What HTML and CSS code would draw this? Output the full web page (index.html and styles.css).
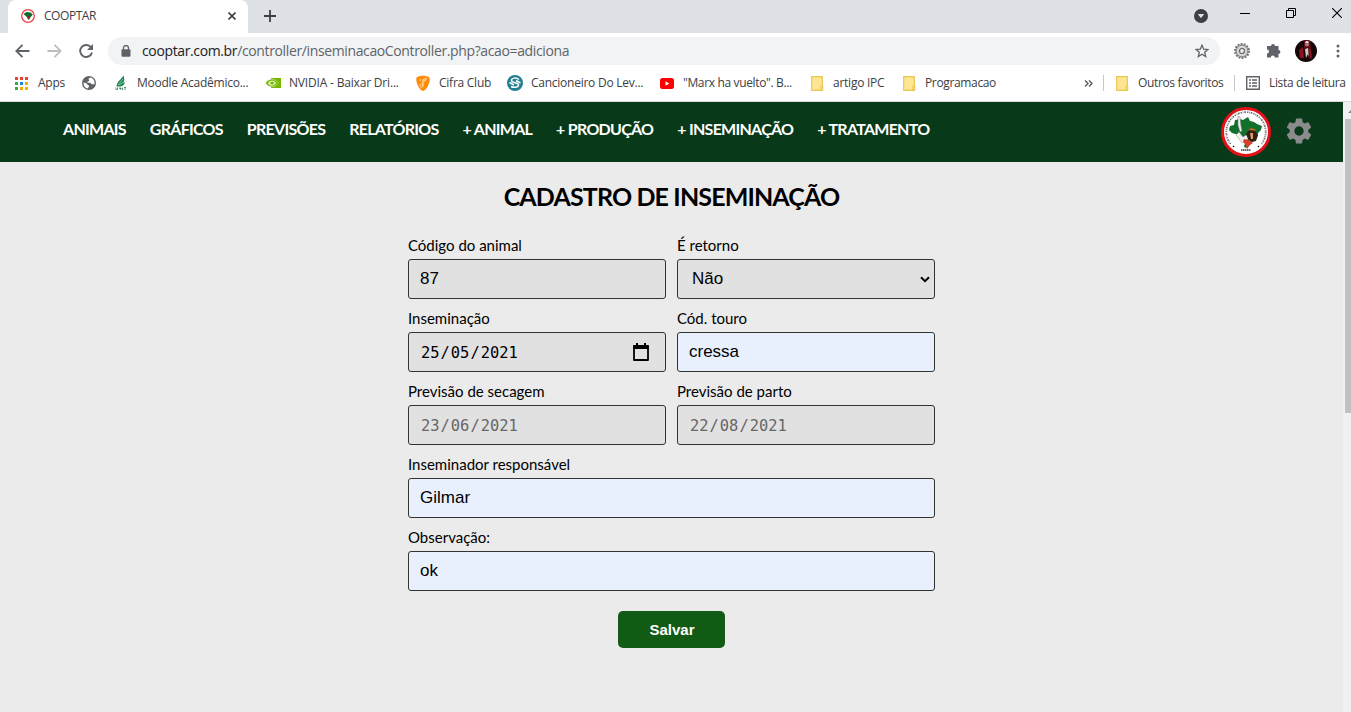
FILE: index.html
```html
<!DOCTYPE html>
<html lang="pt-BR">
<head>
<meta charset="utf-8">
<title>COOPTAR</title>
<link rel="stylesheet" href="styles.css">
</head>
<body>
<svg class="defs" width="0" height="0">
  <symbol id="emblem" viewBox="0 0 50 50">
    <circle cx="25" cy="25" r="23.5" fill="#fff" stroke="#e3101a" stroke-width="3"/>
    <circle cx="25" cy="25" r="19.8" fill="none" stroke="#777" stroke-width="1.7" stroke-dasharray="1.3 .9 .7 .8 1.7 1 92 0" stroke-dashoffset="0" opacity="0"/>
    <path d="M9.500 37A19.700 19.700 0 1 1 40.500 37" fill="none" stroke="#777" stroke-width="1.800" stroke-dasharray="1.300 .900 .700 .800 1.700 1"/>
    <path d="M9 19l4-1 1-5 5-1 3 1 5-3 2 4 4 1 3 2 5 2-1 4-3 3-1 5-4 2-3 4-3 4-3-1 1-4-4-3-2-5-7-2-3-3z" fill="#11712c"/>
    <path d="M17 9l2 1 1 9 1 5-2 1-2-7z" fill="#eee" stroke="#777" stroke-width=".5"/>
    <path d="M15 28l3-3 4 5 5-3 2 3-3 3-5 3z" fill="#eee" stroke="#888" stroke-width=".4"/>
    <path d="M25 27l3-4h6l3 5-2 6-4 1-4-3z" fill="#332015"/>
    <path d="M27 23l3-2 4 1 1 2z" fill="#b5652e"/>
    <path d="M29 26h3v6h-2z" fill="#dc9a70"/>
    <path d="M23 32l5 1 4 3-3 2-3 4-1-4-3-3z" fill="#d8402c"/>
    <path d="M20 43h10" stroke="#666" stroke-width="1.800" stroke-dasharray="1.500 .500"/>
    <circle cx="12.500" cy="39.500" r=".800"/><circle cx="37.500" cy="39.500" r=".800"/>
  </symbol>
  <symbol id="folder" viewBox="0 0 13 15">
    <path d="M.7.7h10.6v13.6H.7z" fill="#ffe594" stroke="#eac54f" stroke-width="1.2"/>
    <path d="M9.8 10h2v4h-2z" fill="#ffe594" stroke="#eac54f"/>
  </symbol>
</svg>

<div class="tabstrip">
  <div class="tab">
    <svg class="favicon" viewBox="0 0 14 14"><circle cx="7" cy="7" r="6.3" fill="#fff" stroke="#ee4248" stroke-width="1.3"/><path d="M2.5 5l3-2 4 .6 2.300 2-2 2.500-2.500 3-1.500-3z" fill="#126b2f"/><path d="M6 7l3 0-.5 3.500L7 9z" fill="#8c2c20"/></svg>
    <span class="tab-title">COOPTAR</span>
    <svg class="tab-close" viewBox="0 0 8 8"><path d="M.5.5l7 7m0-7l-7 7" stroke="#3c4043" stroke-width="1.6"/></svg>
  </div>
  <svg class="newtab" viewBox="0 0 12 12"><path d="M6 0v12M0 6h12" stroke="#3c4043" stroke-width="1.8"/></svg>
  <div class="window-controls">
    <svg width="14" height="14" viewBox="0 0 14 14"><circle cx="7" cy="7" r="7" fill="#3c4043"/><path d="M3.8 5h6.4L7 9.2z" fill="#dee1e6"/></svg>
    <svg width="10" height="11" viewBox="0 0 10 11"><path d="M0 5.5h10" stroke="#000"/></svg>
    <svg width="10" height="10" viewBox="0 0 10 10"><path d="M.5 2.5h7v7h-7zM2.5 2V.5h7v7H8" fill="none" stroke="#000"/></svg>
    <svg width="10" height="10" viewBox="0 0 10 10"><path d="M0 0l10 10M10 0L0 10" stroke="#000" stroke-width="1.1"/></svg>
  </div>
</div>

<div class="toolbar">
  <div class="history">
    <svg width="15" height="14" viewBox="0 0 15 14"><path d="M14.5 7H1.5M7.5.8L1.3 7l6.2 6.2" fill="none" stroke="#5f6368" stroke-width="1.8"/></svg>
    <svg width="15" height="14" viewBox="0 0 15 14"><path d="M.5 7h13M7.5.8L13.700 7l-6.200 6.200" fill="none" stroke="#bcbec1" stroke-width="1.8"/></svg>
    <svg width="14" height="14" viewBox="0 0 14 14"><path d="M12 3.400A6 6 0 1 0 13 8.500" fill="none" stroke="#5f6368" stroke-width="1.9"/><path d="M14 0v6H8z" fill="#5f6368"/></svg>
  </div>
  <div class="address">
    <svg width="10" height="12" viewBox="0 0 10 12"><path d="M2.500 5V3a2.500 2.500 0 0 1 5 0v2" fill="none" stroke="#5f6368" stroke-width="1.300"/><rect x=".5" y="4.300" width="9" height="7.500" rx="1" fill="#5f6368"/></svg>
    <span class="url"><b>cooptar.com.br</b>/controller/inseminacaoController.php?acao=adiciona</span>
    <svg class="star" width="14" height="14" viewBox="0 0 14 14"><path d="M7 1.200l1.700 4 4.300.3-3.300 2.800 1 4.300L7 10.300l-3.700 2.300 1-4.300L1 5.500l4.300-.3z" fill="none" stroke="#5f6368" stroke-width="1.300"/></svg>
  </div>
  <svg class="ext" width="16" height="17" viewBox="0 0 16 17"><circle cx="8" cy="8" r="7" fill="#ccc" stroke="#777" stroke-width="2" stroke-dasharray="1.900 1.240"/><circle cx="8" cy="8" r="5.800" fill="#d4d4d4" stroke="#8b8b8b"/><circle cx="8" cy="8" r="2.500" fill="#eee" stroke="#666" stroke-width="1.200"/></svg>
  <svg class="puzzle" width="15" height="15" viewBox="0 0 15 15"><path d="M4 3h1a2 2 0 0 1 4 0h3.500v4a1.900 1.900 0 0 1 0 3.800V14.500H8.800a2 2 0 0 0-4 0H1v-4a2 2 0 0 0 0-4V3z" fill="#5f6368"/></svg>
  <svg class="avatar" width="22" height="22" viewBox="0 0 22 22"><defs><clipPath id="face"><circle cx="11" cy="11" r="11"/></clipPath></defs><g clip-path="url(#face)"><path d="M0 0h22v22H0z" fill="#160708"/><path d="M9 0h6l1 8-4-1-3 2z" fill="#6d0c18"/><path d="M4 10l4-3 1 11H5zM13 7l3 2 1 9-2 1z" fill="#8a1322"/><path d="M10 9l3-1 1 10-1-4-2 4z" fill="#d9c8c4"/><circle cx="12" cy="4.500" r="2" fill="#9a8278"/><path d="M10 3h4l-1-2h-2z" fill="#ddd"/></g></svg>
  <svg class="more" width="4" height="14" viewBox="0 0 4 14"><g fill="#5f6368"><circle cx="2" cy="2" r="1.500"/><circle cx="2" cy="7" r="1.500"/><circle cx="2" cy="12" r="1.500"/></g></svg>
</div>

<div class="bookmarks">
  <div class="bm"><svg width="14" height="14" viewBox="0 0 14 14"><path d="M1 1h3v3H1zM6 1h3v3H6zM11 1h3v3h-3z" fill="#ea4335"/><path d="M1 6h3v3H1zM1 11h3v3H1z" fill="#34a853"/><path d="M6 6h3v3H6z" fill="#1e88e5"/><path d="M11 6h3v3h-3zM6 11h3v3H6zM11 11h3v3h-3z" fill="#f9ab00"/></svg><span>Apps</span></div>
  <div class="bm"><svg width="14" height="14" viewBox="0 0 14 14"><circle cx="7" cy="7" r="7" fill="#5f6368"/><path d="M8.500 1.500C7 1.500 6 3 7 4c1 .8-1 1.500-1.500 1.500-.5 1 0 1.500 1.500 1.300 2-.2 2 1.500 3.500 1.500H12.600C13 4.500 11 2 8.500 1.500zM1.500 6.500c2 0 3.500 1 4 2 .5.900 1.500.800 1.500 1.500 0 1-1 2-1.500 2.500C3 12 1.300 9.500 1.500 6.500z" fill="#fff"/></svg></div>
  <div class="bm"><svg width="16" height="16" viewBox="0 0 16 16"><path d="M3.500 11.500C4 6 8 5 10.500.5c1 3.500 1 5 0 7h1.500c-1 2.500-3 4-5 4z" fill="#16844e"/><path d="M5 10l5-6M6 10l5-3" stroke="#fff" stroke-width=".5"/><path d="M3 12.500v2.500m1.500-2.500V15M6 13h2v1.500m1.500-2V15m1.500-2.500h2m-1 0V15" stroke="#4f9874"/></svg><span>Moodle Acadêmico...</span></div>
  <div class="bm nvidia"><svg width="16" height="16" viewBox="0 0 16 16"><path d="M6 3h10v10H6z" fill="#76b900"/><path d="M.5 8c3-5 9-5 13 0-4 5-10 5-13 0z" fill="#76b900" stroke="#fff" stroke-width=".4"/><path d="M3 8c2.500-3.500 6-3.500 8 0-2.500 3.500-6 3.500-8 0z" fill="#e7f3cb"/><path d="M5 8c1.500-2 3-2 4 0-1 2-2.500 2-4 0z" fill="#76b900"/></svg><span>NVIDIA - Baixar Dri...</span></div>
  <div class="bm"><svg width="16" height="16" viewBox="0 0 16 16"><path d="M1.500 2.500C4 0 12 0 14.500 2.500 16 7 11 16 8 16S0 7 1.500 2.500z" fill="#ff8c0a"/><path d="M6 12c-2-1-1-3 1-3s1 4-1 3zm2-1V5l3-2v2L8 7m-3-1l1-2" fill="none" stroke="#ffe0ad"/></svg><span>Cifra Club</span></div>
  <div class="bm"><svg width="16" height="16" viewBox="0 0 16 16"><circle cx="8" cy="8" r="8" fill="#217f92"/><path d="M12 4.500C9 2 4.500 3 4.500 5.500S11.500 7.500 11.500 10 7 13 4 11.500M2.500 7.500l4.500 2.500M9 5.500l4.500 2.500" fill="none" stroke="#fff" stroke-width="1.500"/></svg><span>Cancioneiro Do Lev...</span></div>
  <div class="bm tight"><svg width="16" height="16" viewBox="0 0 16 16"><rect x="1" y="3" width="14" height="11" rx="2.500" fill="#f00"/><path d="M6.500 6.300v4.400l3.800-2.200z" fill="#fff"/></svg><span>"Marx ha vuelto". B...</span></div>
  <div class="bm folder"><svg width="13" height="15"><use href="#folder"/></svg><span>artigo IPC</span></div>
  <div class="bm folder tight"><svg width="13" height="15"><use href="#folder"/></svg><span>Programacao</span></div>
  <svg class="chev" width="9" height="7" viewBox="0 0 9 7"><path d="M1 .5l3 3-3 3m4-6l3 3-3 3" fill="none" stroke="#5f6368" stroke-width="1.500"/></svg>
  <i class="sep"></i>
  <div class="bm folder tight"><svg width="13" height="15"><use href="#folder"/></svg><span>Outros favoritos</span></div>
  <i class="sep"></i>
  <div class="bm tight"><svg width="16" height="14" viewBox="0 0 16 14"><path d="M1.700.7h12.600v12.600H1.700z" fill="none" stroke="#5f6368" stroke-width="1.400"/><path d="M4 4h2m1 0h5M4 7h2m1 0h5m-8 3h2m1 0h5" stroke="#5f6368" stroke-width="1.500"/></svg><span>Lista de leitura</span></div>
</div>

<div class="viewport">
  <div class="page">
    <header class="site-header">
      <nav class="nav">
        <a>ANIMAIS</a><a>GRÁFICOS</a><a>PREVISÕES</a><a>RELATÓRIOS</a><a>+ ANIMAL</a><a>+ PRODUÇÃO</a><a>+ INSEMINAÇÃO</a><a>+ TRATAMENTO</a>
      </nav>
      <svg class="logo" width="50" height="50"><use href="#emblem"/></svg>
      <svg class="gear" width="26" height="26" viewBox="2 2 20 20"><path fill="#8b8b8b" d="M19.140 12.940c.04-.3.060-.61.060-.94 0-.32-.020-.64-.070-.94l2.030-1.580c.18-.14.230-.41.120-.61l-1.920-3.320c-.12-.22-.37-.29-.59-.22l-2.390.96c-.5-.38-1.030-.7-1.620-.94l-.36-2.540c-.04-.24-.24-.41-.48-.41h-3.840c-.24 0-.43.17-.47.41l-.36 2.540c-.59.24-1.130.57-1.620.94l-2.390-.96c-.22-.08-.47 0-.59.220L2.740 8.870c-.12.210-.08.470.120.610l2.030 1.580c-.05.300-.09.630-.09.940s.02.640.07.940l-2.030 1.580c-.18.140-.23.410-.12.610l1.920 3.320c.12.220.37.290.59.220l2.390-.96c.5.380 1.030.7 1.620.94l.36 2.540c.05.240.24.410.48.410h3.840c.24 0 .44-.17.47-.41l.36-2.540c.59-.24 1.130-.56 1.620-.94l2.390.96c.22.080.47 0 .59-.22l1.920-3.320c.12-.22.070-.47-.12-.61l-2.010-1.580zM12 15.600a3.600 3.600 0 1 1 0-7.200 3.600 3.600 0 0 1 0 7.200z"/></svg>
    </header>
    <main class="content">
      <h1>CADASTRO DE INSEMINAÇÃO</h1>
      <form class="form">
        <label class="field"><span>Código do animal</span><input value="87"></label>
        <label class="field"><span>É retorno</span><div class="box select">Não<svg width="10" height="7" viewBox="0 0 10 7"><path d="M1 1.200l4 4 4-4" fill="none" stroke="#000" stroke-width="2"/></svg></div></label>
        <label class="field"><span>Inseminação</span><div class="box date"><span>25</span>/<span>05</span>/<span>2021</span><svg width="16" height="18" viewBox="0 0 16 18"><path d="M1 3h14v14H1z" fill="none" stroke="#000" stroke-width="1.800" stroke-linejoin="round"/><path d="M.5 2h15v4H.5zM3 0h2v3H3zM11 0h2v3h-2z"/></svg></div></label>
        <label class="field"><span>Cód. touro</span><input class="filled" value="cressa"></label>
        <label class="field"><span>Previsão de secagem</span><div class="box date muted"><span>23</span>/<span>06</span>/<span>2021</span></div></label>
        <label class="field"><span>Previsão de parto</span><div class="box date muted"><span>22</span>/<span>08</span>/<span>2021</span></div></label>
        <label class="field wide"><span>Inseminador responsável</span><input class="filled" value="Gilmar"></label>
        <label class="field wide"><span>Observação:</span><input class="filled" value="ok"></label>
        <button type="button" class="save">Salvar</button>
      </form>
    </main>
  </div>
  <div class="scrollbar"><svg width="8" height="17" viewBox="0 0 8 17"><path d="M5 11l3-3v3z" fill="#888"/></svg><div class="thumb"></div></div>
</div>
</body>
</html>
```

FILE: styles.css
```css
* { box-sizing: border-box; }
body { margin: 0; width: 1351px; height: 712px; overflow: hidden; background: #fff; font-family: "Open Sans", sans-serif; }
svg { display: block; flex: none; }
.defs { position: absolute; }

/* Browser window */
.tabstrip { height: 33px; background: #dee1e6; display: flex; padding-left: 8px; }
.tab { width: 240px; height: 33px; background: #fff; border-radius: 8px 8px 0 0; display: flex; align-items: center; padding: 0 12px 1px 13px; }
.favicon { width: 14px; height: 14px; }
.tab-title { font-size: 12px; letter-spacing: -.45px; color: #3c4043; margin: -2px 0 0 9px; flex: 1; }
.tab-close { width: 8px; height: 8px; }
.newtab { width: 12px; height: 12px; margin: 10px 0 0 16px; }
.window-controls { margin-left: auto; display: grid; grid-template-columns: 46px 46px 46px 19px; padding-top: 9px; }
.window-controls svg:nth-child(2) { margin-top: -1px; }
.window-controls svg:nth-child(3), .window-controls svg:nth-child(4) { margin-top: -1px; }

.toolbar { height: 36px; display: flex; align-items: center; padding-left: 15px; }
.history { display: flex; gap: 17px; width: 93px; }
.address { width: 1112px; height: 28px; border-radius: 14px; background: #f1f3f4; display: flex; align-items: center; padding: 0 11px 0 13px; }
.url { font-size: 14px; letter-spacing: -.37px; color: #5f6368; margin: -1px 0 0 11px; white-space: nowrap; }
.url b { font-weight: 400; color: #202124; }
.star { margin-left: auto; }
.ext { margin-left: 14px; }
.puzzle { margin: -2px 0 0 16px; }
.avatar { margin-left: 14px; }
.more { margin-left: 19px; }

.bookmarks { height: 33px; border-bottom: 1px solid #d8dadd; display: grid; grid-template-columns: 68px 31px 152px 150px 92px 152px 150px 92px 183px 19px 11px 120px 11px 106px; align-items: center; padding: 0 0 4px 14px; }
.bm { display: grid; grid-template-columns: 24px auto; align-items: center; justify-content: start; font-size: 12px; color: #3c4043; white-space: nowrap; letter-spacing: -.25px; }
.bm span { margin-top: -1px; }
.tight { letter-spacing: -.35px; }
.nvidia { letter-spacing: -.18px; }
.folder svg { margin-left: 2px; }
.sep { width: 1px; height: 16px; background: #c4c7cb; }

/* Site */
.viewport { display: flex; height: 610px; }
.page { width: 1343px; background: #ebebeb; }
.site-header { height: 60px; background: #083a1a; display: flex; align-items: center; padding-left: 63px; }
.nav { display: flex; gap: 24px; font: bold 16px Lato, sans-serif; letter-spacing: -.73px; color: #fff; white-space: nowrap; margin-top: -7px; }
.logo { margin-left: auto; }
.gear { margin: -2px 31px 0 15px; }

.content { padding-top: 19px; font-family: Lato, sans-serif; }
h1 { margin: 0 0 25px; font-size: 25px; line-height: 30px; font-weight: bold; letter-spacing: -.86px; text-align: center; }
.form { width: 527px; margin: 0 auto; display: grid; grid-template-columns: 258px 258px; column-gap: 11px; row-gap: 10px; }
.field > span { display: block; height: 23px; line-height: 19px; font-size: 15px; white-space: nowrap; }
.wide { grid-column: 1 / 3; }
input, .box { display: flex; align-items: center; width: 100%; height: 40px; border: 1px solid #333; border-radius: 3px; background: #e1e1e1; padding: 0 11px; font: 17px "Liberation Sans", sans-serif; color: #000; margin: 0; }
.filled { background: #e8f0fe; }
.select { justify-content: space-between; padding: 0 4px 0 14px; }
.date { font: 15.4px "DejaVu Sans Mono", monospace; padding: 1px 16px 0 11px; }
.date span { padding: 0 1px; }
.date svg { margin: -2px 0 0 auto; }
.muted { color: #666; }
.save { grid-column: 1 / 3; justify-self: center; width: 107px; height: 37px; margin-top: 10px; border: 0; border-radius: 5px; background: #125b14; color: #fff; font: bold 15px "Liberation Sans", sans-serif; padding: 0 0 0 1px; }

.scrollbar { width: 8px; background: #f1f1f1; }
.thumb { height: 294px; margin-left: 2px; background: #c1c1c1; }
```
